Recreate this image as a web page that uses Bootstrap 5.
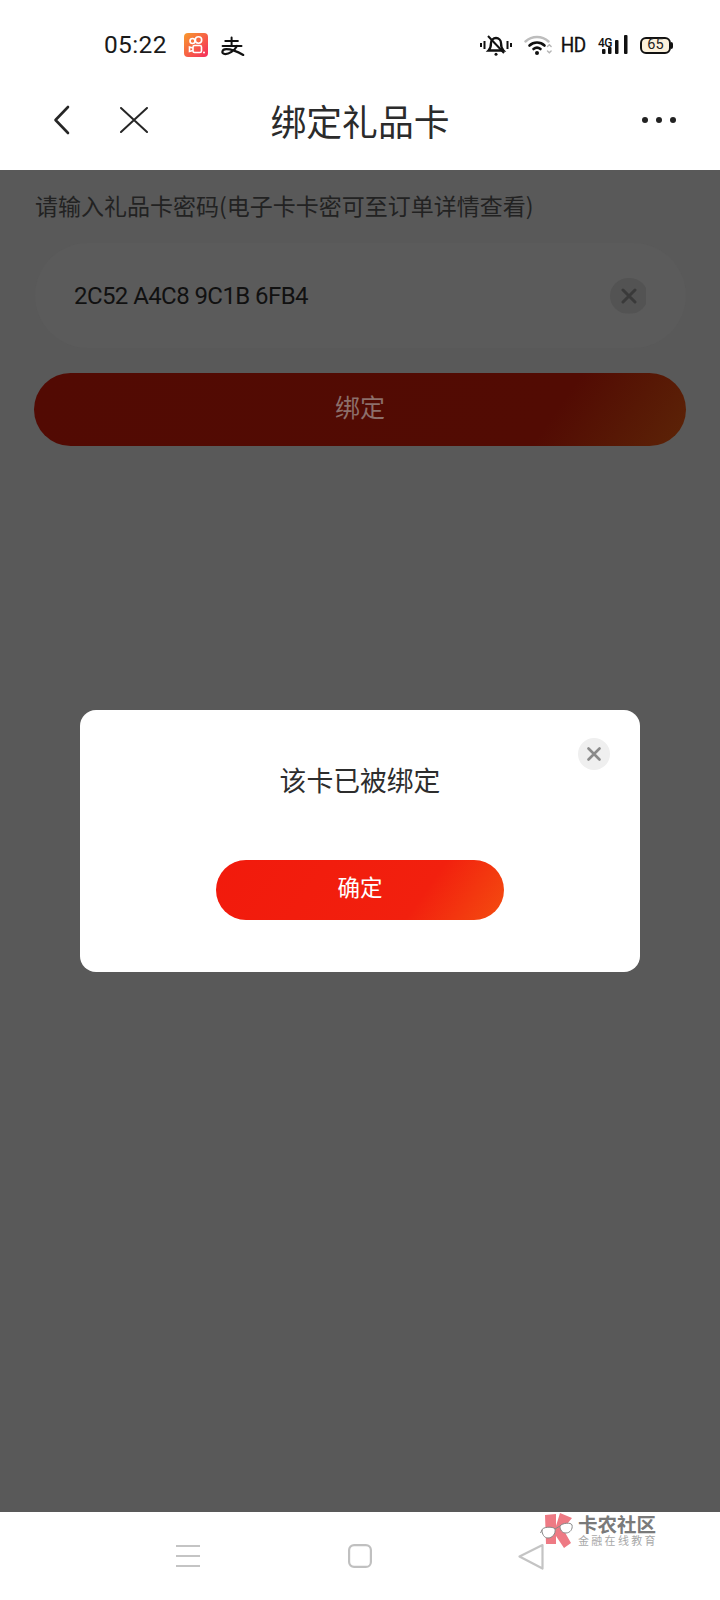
<!DOCTYPE html>
<html lang="zh-CN">
<head>
    <meta charset="UTF-8">
    <meta name="viewport" content="width=device-width, initial-scale=1.0">
    <title>绑定礼品卡</title>
    <link href="https://cdn.jsdelivr.net/npm/bootstrap@5.3.0/dist/css/bootstrap.min.css" rel="stylesheet">
    <style>
        body { width: 720px; height: 1600px; overflow: hidden; background: #fff; font-family: Roboto, "Noto Sans CJK SC", sans-serif; color: #222; }
        .status-row { height: 90px; padding-left: 104px; }
        .status-time { font-size: 24.5px; width: 80px; color: #1a1a1a; letter-spacing: .35px; }
        .app-icon { margin-right: 8px; }
        .status-right { margin-left: auto; padding-right: 47px; }
        .hd-text { font-family: "Liberation Sans Narrow", Roboto, sans-serif; font-size: 21px; line-height: 1; color: #111; margin: 0 12px 0 6px; letter-spacing: -.6px; -webkit-text-stroke: .3px #111; transform: scaleX(.9); transform-origin: right center; }
        .net-wrap { width: 30px; height: 20px; margin-right: 12px; }
        .net-wrap span { left: 0; top: 2px; font-size: 12px; line-height: 1; font-weight: 500; color: #111; letter-spacing: -.6px; }
        .batt-box { width: 31px; height: 17px; border: 2px solid #111; border-radius: 6px; background: #fbf1dc; font-size: 14.5px; line-height: 1; color: #222; margin-right: 2px; }
        .batt-box::after { content: ""; position: absolute; right: -4px; top: 3px; width: 2px; height: 7px; background: #111; border-radius: 0 2px 2px 0; }
        .title-row { height: 80px; padding-bottom: 20px; display: grid; grid-template-columns: 1fr auto 1fr; align-items: center; }
        .page-title { font-size: 35.8px; line-height: 44px; color: #2b2b2b; font-family: "Noto Sans CJK SC", sans-serif; }
        .nav-left { padding-left: 53px; gap: 50px; }
        .nav-right { padding-right: 44px; gap: 8px; }
        .menu-dot { width: 6px; height: 6px; border-radius: 50%; background: #222; }
        .dim-area { height: 1342px; background: #595959; padding: 19px 34px 0; font-family: Roboto, "Noto Sans CJK SC", sans-serif; }
        .hint-label { font-size: 23px; line-height: 32px; color: #222; margin-left: 1px; white-space: nowrap; font-family: "Noto Sans CJK SC", sans-serif; }
        .code-box { height: 105px; margin: 22px 0 25px 1px; padding: 0 38px 0 39px; border-radius: 53px; background: #5b5b5b; font-size: 24px; letter-spacing: -.58px; color: #111; }
        .clear-dot { width: 38px; height: 36px; border-radius: 50%; background: #535353; clip-path: inset(0 2px 0 0); }
        .bind-btn { height: 73px; padding-bottom: 6px; border-radius: 37px; background: linear-gradient(125deg, #520a03 0%, #520b03 78%, #5c2407 100%); color: #8c6f6b; font-size: 25px; font-family: "Noto Sans CJK SC", sans-serif; }
        .dialog-box { width: 560px; height: 262px; background: #fff; border-radius: 16px; padding-top: 50px; }
        .dialog-text { font-size: 26.8px; line-height: 40px; color: #2d2d2d; font-family: "Noto Sans CJK SC", sans-serif; }
        .dialog-close { top: 28px; right: 30px; width: 32px; height: 32px; border-radius: 50%; background: #efefef; }
        .ok-btn { width: 288px; height: 60px; margin-top: 60px; padding-bottom: 6px; border-radius: 30px; background: linear-gradient(125deg, #f21a0c 0%, #f2200e 70%, #f44d10 100%); color: #fff; font-size: 22.5px; font-family: "Noto Sans CJK SC", sans-serif; }
        .bottom-row { height: 88px; padding-left: 176px; background: #fff; }
        .gap-one { margin-right: 148px; }
        .gap-two { margin-right: 146px; }
        .mark-wrap { left: 540px; top: 1px; }
        .mark-text { margin-left: 2px; }
        .mark-name { font-size: 19.5px; line-height: 21px; font-weight: 700; color: #7a7a7a; font-family: "Noto Sans CJK SC", sans-serif; }
        .mark-sub { font-size: 11px; line-height: 13px; color: #a8a8a8; letter-spacing: 2.3px; font-family: "Noto Sans CJK SC", sans-serif; }
    </style>
</head>
<body>
    <div class="status-row d-flex align-items-center">
        <div class="status-time">05:22</div>
        <svg class="app-icon" width="24" height="24" viewBox="0 0 24 24">
            <defs>
                <linearGradient id="ks" x1="0" y1="0" x2="1" y2="1">
                    <stop offset="0" stop-color="#f89a2c"/>
                    <stop offset="1" stop-color="#f52a5e"/>
                </linearGradient>
            </defs>
            <rect width="24" height="24" rx="4" fill="url(#ks)"/>
            <g fill="none" stroke="#fff" stroke-width="1.600">
                <circle cx="8.500" cy="8" r="2.500"/>
                <circle cx="14.500" cy="7" r="3.200"/>
                <rect x="9" y="12.500" width="8.500" height="7" rx="1.600"/>
                <path d="M9 15l-3.500-1v4.500l3.500-1"/>
            </g>
            <circle cx="20" cy="19.500" r="1" fill="#fff"/>
        </svg>
        <svg width="33" height="27" viewBox="0 0 36 30" fill="none" stroke="#111" stroke-width="2.200" stroke-linecap="round">
            <path d="M10 10H24M17 6V15M7 15.500H28"/>
            <path d="M23 15.500C20 21 14 24.500 10 24.500C5 24.500 6 19 11 19C17 19 24 22 30 25.500" stroke-width="2.400"/>
        </svg>
        <div class="status-right d-flex align-items-center">
            <svg class="me-2" width="32" height="22" viewBox="0 0 32 22" fill="none" stroke="#111" stroke-width="2.300">
                <path d="M1 9v4M4.500 7v8M27.500 7v8M31 9v4" stroke-width="2"/>
                <path d="M8.500 16.500c2-2 2.500-4 2.500-7.500a5 5 0 0 1 10 0c0 3.500 .5 5.500 2.500 7.500z"/>
                <path d="M8 2l16 17" stroke-width="2"/>
                <circle cx="16" cy="20.300" r="1.500" fill="#111" stroke="none"/>
            </svg>
            <svg class="ms-1" width="28" height="20" viewBox="0 0 28 20" fill="none" stroke-linecap="round">
                <path d="M1.500 6.500a17 17 0 0 1 23 0" stroke="#bdbdbd" stroke-width="2.400"/>
                <path d="M5.500 10.500a11 11 0 0 1 15 0" stroke="#111" stroke-width="2.600"/>
                <path d="M9.500 14a5.500 5.500 0 0 1 7 0" stroke="#111" stroke-width="2.600"/>
                <circle cx="13" cy="18" r="2" fill="#111"/>
                <path d="M23.500 11.500l1.800-1.800 1.800 1.800M23.500 16l1.800 1.800 1.800-1.800" stroke="#b5b5b5" stroke-width="1.400"/>
            </svg>
            <span class="hd-text">HD</span>
            <div class="net-wrap position-relative">
                <span class="position-absolute">4G</span>
                <svg class="position-absolute top-0 start-0" width="30" height="20" viewBox="0 0 30 20" fill="#111">
                    <rect x="4" y="14" width="3.500" height="5" rx="1"/>
                    <rect x="10" y="12" width="3.500" height="7" rx="1"/>
                    <rect x="17" y="5" width="3.500" height="14" rx="1"/>
                    <rect x="26" y="0" width="3.500" height="19" rx="1"/>
                </svg>
            </div>
            <div class="batt-box position-relative d-flex align-items-center justify-content-center">65</div>
        </div>
    </div>

    <div class="title-row">
        <div class="nav-left d-flex align-items-center">
            <svg width="17" height="30" viewBox="0 0 17 30" fill="none" stroke="#262626" stroke-width="2.600" stroke-linecap="round" stroke-linejoin="round">
                <path d="M15 2L2.500 15 15 28"/>
            </svg>
            <svg width="28" height="26" viewBox="0 0 28 26" fill="none" stroke="#262626" stroke-width="2" stroke-linecap="round">
                <path d="M1 1l26 24M27 1L1 25"/>
            </svg>
        </div>
        <div class="page-title">绑定礼品卡</div>
        <div class="nav-right d-flex justify-content-end">
            <span class="menu-dot"></span><span class="menu-dot"></span><span class="menu-dot"></span>
        </div>
    </div>

    <div class="dim-area position-relative">
        <div class="hint-label">请输入礼品卡密码(电子卡卡密可至订单详情查看)</div>
        <div class="code-box d-flex align-items-center justify-content-between">
            <span>2C52 A4C8 9C1B 6FB4</span>
            <span class="clear-dot d-flex align-items-center justify-content-center">
                <svg width="16" height="16" viewBox="0 0 16 16" stroke="#3a3a3a" stroke-width="3" stroke-linecap="round"><path d="M2 2l12 12M14 2L2 14"/></svg>
            </span>
        </div>
        <div class="bind-btn d-flex align-items-center justify-content-center">绑定</div>

        <div class="position-absolute top-0 start-0 w-100 h-100 d-flex align-items-center justify-content-center">
            <div class="dialog-box position-relative d-flex flex-column align-items-center">
                <div class="dialog-text">该卡已被绑定</div>
                <div class="ok-btn d-flex align-items-center justify-content-center">确定</div>
                <span class="dialog-close position-absolute d-flex align-items-center justify-content-center">
                    <svg width="14" height="14" viewBox="0 0 14 14" stroke="#8a8a8a" stroke-width="2.600" stroke-linecap="round"><path d="M1.500 1.500l11 11M12.500 1.500l-11 11"/></svg>
                </span>
            </div>
        </div>
    </div>

    <div class="bottom-row position-relative d-flex align-items-center">
        <svg class="gap-one" width="24" height="24" viewBox="0 0 24 24" stroke="#c4c4c4" stroke-width="2.200">
            <path d="M0 2h24M0 12h24M0 22h24"/>
        </svg>
        <svg class="gap-two" width="24" height="24" viewBox="0 0 24 24" fill="none" stroke="#c0c0c0" stroke-width="2.200">
            <rect x="1.100" y="1.100" width="21.800" height="21.800" rx="5"/>
        </svg>
        <svg width="26" height="27" viewBox="0 0 26 27" fill="none" stroke="#c4c4c4" stroke-width="2.200" stroke-linejoin="round">
            <path d="M24.500 2L1.500 13.500 24.500 25.500z"/>
        </svg>

        <div class="mark-wrap position-absolute d-flex">
            <svg width="36" height="36" viewBox="5 3 36 36">
                <path d="M10 5L21 4V34H11zM25 3L37 8 28 19 36 33 29 38 21 26V16z" fill="#ee7a84"/>
                <path d="M7 20C7 17 18 16 20 19C21 24 17 28 13 28C9 28 7 24 7 20zM25 16C27 13 36 12 37 15C38 19 35 23 31 23C27 23 25 20 25 16z" fill="#fff" stroke="#888" stroke-width="1"/>
                <path d="M20 19L25 16M7 20L5.500 23" stroke="#888" stroke-width="1" fill="none"/>
            </svg>
            <div class="mark-text">
                <div class="mark-name">卡农社区</div>
                <div class="mark-sub">金融在线教育</div>
            </div>
        </div>
    </div>

    <script src="https://cdn.jsdelivr.net/npm/bootstrap@5.3.0/dist/js/bootstrap.bundle.min.js"></script>
</body>
</html>
